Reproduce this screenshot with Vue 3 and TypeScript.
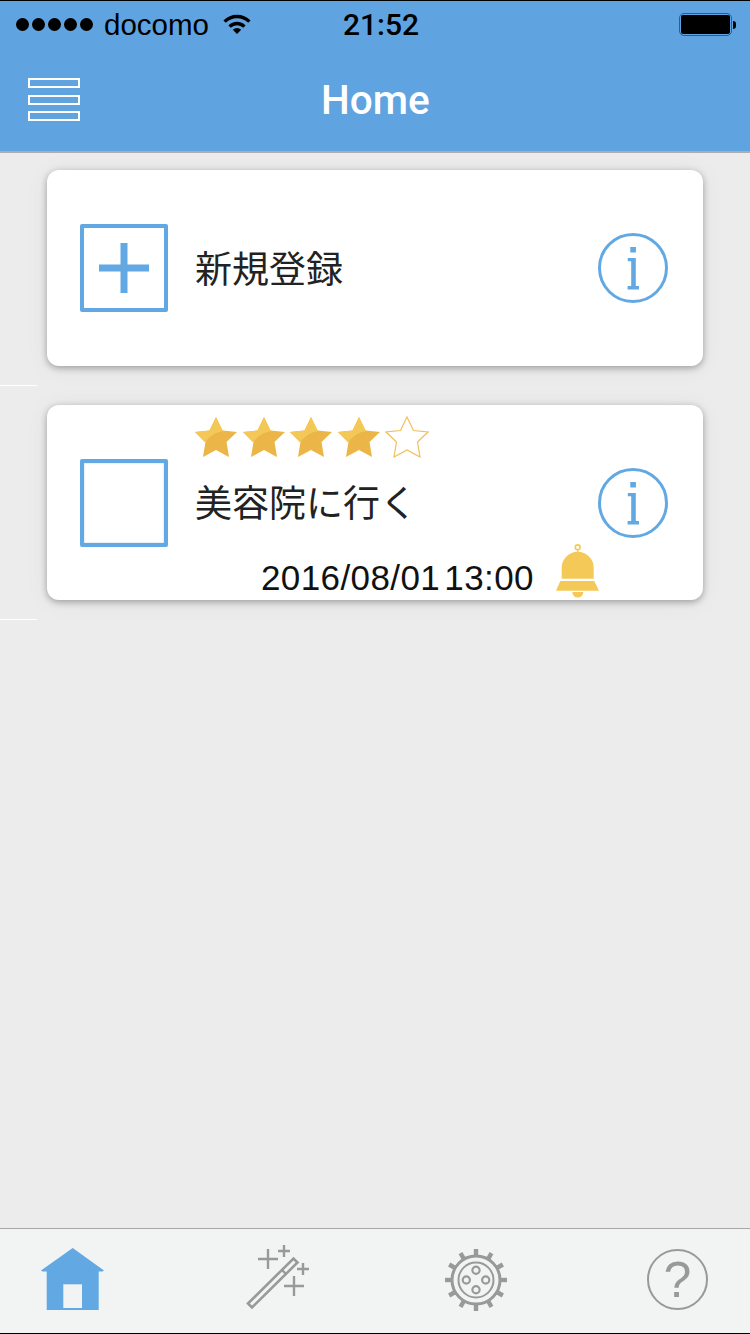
<template>
  <div class="phone">
    <header class="top">
      <div class="status">
        <div class="signal">
          <i v-for="n in 5" :key="n" class="signal-dot"></i>
        </div>
        <span class="carrier">docomo</span>
        <svg class="wifi" width="30" height="22" viewBox="-15 -20 30 22">
          <path d="M-12.4 -12.4A17.5 17.5 0 0 1 12.4 -12.4" fill="none" stroke="#000" stroke-width="3.4" />
          <path d="M-7.4 -7.4A10.5 10.5 0 0 1 7.4 -7.4" fill="none" stroke="#000" stroke-width="3.4" />
          <path d="M0 0L-4.2 -4.2A6 6 0 0 1 4.2 -4.2Z" fill="#000" />
        </svg>
        <span class="clock">21:52</span>
        <div class="battery"><i class="battery-fill"></i></div>
        <i class="battery-nub"></i>
      </div>
      <div class="nav">
        <div class="burger">
          <i></i>
          <i></i>
          <i></i>
        </div>
        <h1 class="title">Home</h1>
      </div>
    </header>

    <main class="list">
      <section class="row">
        <div class="card">
          <div class="check">
            <svg width="52" height="52" viewBox="0 0 52 52">
              <path d="M26 1V51M1 26H51" stroke="#62a8e3" stroke-width="7" fill="none" />
            </svg>
          </div>
          <div class="card-body card-body--center">
            <p class="label">新規登録</p>
          </div>
          <svg class="info" width="70" height="70" viewBox="0 0 70 70">
            <circle cx="35" cy="35" r="33.5" fill="none" stroke="#62a8e3" stroke-width="3" />
            <path d="M32.3 14H37.9V19.6H32.3ZM29.8 25H37.8V53H41V56.4H29.6V53H33.2V28.2H29.8Z" fill="#62a8e3" />
          </svg>
        </div>
      </section>
      <i class="sep"></i>

      <section class="row">
        <div class="card card--task">
          <div class="check check--soft"></div>
          <div class="card-body">
            <div class="stars">
              <svg v-for="(on, i) in stars" :key="i" class="star" width="44" height="42" viewBox="-1 -1 44 42">
                <template v-if="on">
                  <path :d="starPath" fill="#ebb547" />
                  <path d="M21 0L27.5 13.5L30 14Q17 15 10 25.5L0 15L14.5 13.5Z" fill="#f4c857" />
                </template>
                <path v-else :d="starPath" fill="#fff" stroke="#f0bf5a" stroke-width="1.2" />
              </svg>
            </div>
            <p class="label label--task">美容院に行く</p>
            <div class="when">
              <span class="date">2016/08/01 13:00</span>
              <svg class="bell" width="44" height="54" viewBox="0 0 44 54">
                <circle cx="21.7" cy="3.3" r="2.4" fill="none" stroke="#f5c958" stroke-width="1.6" />
                <path d="M21 5H22.4V8H21Z" fill="#f5c958" />
                <path d="M5.7 34.7V23.7a16 16 0 0 1 32 0V34.7Z" fill="#f5c958" />
                <path d="M4.3 37H38.3L43 46.7H0Z" fill="#f5c958" />
                <path d="M16.3 48H27.3a5.5 5.5 0 0 1 -11 0Z" fill="#f5c958" />
              </svg>
            </div>
          </div>
          <svg class="info" width="70" height="70" viewBox="0 0 70 70">
            <circle cx="35" cy="35" r="33.5" fill="none" stroke="#62a8e3" stroke-width="3" />
            <path d="M32.3 14H37.9V19.6H32.3ZM29.8 25H37.8V53H41V56.4H29.6V53H33.2V28.2H29.8Z" fill="#62a8e3" />
          </svg>
        </div>
      </section>
      <i class="sep"></i>
    </main>

    <footer class="tabs">
      <svg class="tab tab--home" width="63" height="63" viewBox="0 0 63 63">
        <path d="M31.7 0L63 22.5L61.5 23.5H57.7V62H5.7V23.5H1.5L0 22.5Z" fill="#62a8e3" />
        <rect x="22.3" y="36.3" width="18.7" height="23.7" fill="#f2f4f4" />
      </svg>
      <svg class="tab tab--wand" width="66" height="66" viewBox="0 0 66 66">
        <g fill="none" stroke="#999" stroke-width="2.4">
          <path d="M3 58.5L48.5 13.5L52.5 17.5L7 62.5Z" stroke-width="2.6" />
          <path d="M37 25L41 29" />
          <path d="M13 14H33M23 4V24" />
          <path d="M33 6H45M39 0V12" />
          <path d="M52 24H64M58 18V30" />
          <path d="M39 41H59M49 31V51" />
        </g>
      </svg>
      <svg class="tab tab--gear" width="62" height="62" viewBox="-31 -31 62 62">
        <g fill="#999">
          <rect v-for="a in teeth" :key="a" x="-2.2" y="-31" width="4.4" height="9" :transform="`rotate(${a})`" />
        </g>
        <g fill="none" stroke="#999">
          <circle r="24" stroke-width="3" fill="#f2f4f4" />
          <circle r="17.5" stroke-width="2" />
          <circle cy="-9.7" r="3.6" stroke-width="2.2" />
          <circle cy="9.7" r="3.6" stroke-width="2.2" />
          <circle cx="-9.7" r="3.6" stroke-width="2.2" />
          <circle cx="9.7" r="3.6" stroke-width="2.2" />
        </g>
      </svg>
      <div class="tab tab--help">?</div>
    </footer>
  </div>
</template>

<script setup lang="ts">
const stars: boolean[] = [true, true, true, true, false]
const starPath = 'M21 0L27.5 13.5L42 15L31.5 25L34 40L21 33L8 40L10.5 25L0 15L14.5 13.5Z'
const teeth: number[] = Array.from({ length: 12 }, (_, i) => i * 30)
</script>

<style>
html,
body {
  margin: 0;
  background: #ececec;
}
</style>

<style scoped>
.phone {
  width: 750px;
  height: 1334px;
  display: flex;
  flex-direction: column;
  background: #ececec;
  font-family: "Liberation Sans", "Noto Sans CJK JP", sans-serif;
  overflow: hidden;
}

.top {
  height: 153px;
  box-sizing: border-box;
  flex-shrink: 0;
  background: #5fa4e0;
  border-top: 1px solid #000;
  border-bottom: 2px solid #adadad;
}

.status {
  height: 47px;
  display: flex;
  align-items: center;
  padding-left: 16px;
  color: #000;
}

.signal {
  display: flex;
  gap: 3px;
}

.signal-dot {
  width: 13px;
  height: 13px;
  border-radius: 50%;
  background: #000;
}

.carrier {
  margin-left: 11px;
  font-size: 29.5px;
  width: 105px;
}

.wifi {
  margin-left: 13px;
  margin-top: 0;
}

.clock {
  margin-left: 91px;
  width: 76px;
  font-family: Roboto, "Liberation Sans", sans-serif;
  font-size: 30px;
  font-weight: 500;
}

.battery {
  margin-left: 260px;
  width: 53px;
  height: 23px;
  box-sizing: border-box;
  padding: 1px;
  border: 1.5px solid #2b5f8c;
  border-radius: 5px;
}

.battery-fill {
  display: block;
  height: 100%;
  background: #000;
  border-radius: 2px;
}

.battery-nub {
  width: 3px;
  height: 8px;
  margin-left: 1px;
  background: #000;
  border-radius: 0 3px 3px 0;
}

.nav {
  height: 103px;
  display: flex;
  align-items: center;
  padding-left: 28px;
}

.burger {
  display: flex;
  flex-direction: column;
  gap: 6.5px;
}

.burger i {
  display: block;
  width: 52px;
  height: 10px;
  box-sizing: border-box;
  border: 2px solid #fff;
}

.title {
  margin: 1px 0 0 241px;
  font-family: Roboto, "Liberation Sans", sans-serif;
  font-size: 40.5px;
  line-height: 44px;
  font-weight: 500;
  color: #fff;
}

.list {
  flex: 1;
  display: flex;
  flex-direction: column;
  align-items: flex-start;
}

.row {
  padding: 17px 47px 19px;
}

.row + .sep + .row {
  padding-top: 19px;
}

.sep {
  display: block;
  width: 37px;
  height: 1px;
  background: #fff;
}

.card {
  width: 656px;
  height: 196px;
  box-sizing: border-box;
  display: flex;
  align-items: center;
  padding: 0 35px 0 33px;
  background: #fff;
  border-radius: 12px;
  box-shadow: 0 2px 7px rgba(0, 0, 0, 0.32), 0 2px 26px rgba(0, 0, 0, 0.05);
}

.card--task {
  height: 195px;
}

.check {
  width: 88px;
  height: 88px;
  box-sizing: border-box;
  flex-shrink: 0;
  display: flex;
  align-items: center;
  justify-content: center;
  border: 4px solid #62a8e3;
  border-radius: 2px;
}

.check--soft {
  box-shadow: inset 0 0 2px rgba(98, 168, 227, 0.55);
}

.card-body {
  flex: 1;
  align-self: stretch;
  display: flex;
  flex-direction: column;
  margin-left: 27px;
  min-width: 0;
}

.card-body--center {
  justify-content: center;
  padding-bottom: 2px;
}

.label {
  margin: 0;
  font-family: "Noto Sans CJK JP", sans-serif;
  font-size: 37px;
  line-height: 48px;
  font-weight: 400;
  color: #222;
}

.label--task {
  margin-top: 19px;
}

.stars {
  display: flex;
  gap: 3.7px;
  margin: 11px 0 0 -1px;
}

.star {
  display: block;
  flex-shrink: 0;
}

.when {
  display: flex;
  align-items: center;
  margin: 26px 0 0 66px;
  height: 54px;
  white-space: nowrap;
}

.date {
  flex-shrink: 0;
  font-size: 35px;
  line-height: 54px;
  letter-spacing: 0.4px;
  word-spacing: -6px;
  color: #111;
}

.bell {
  margin: -14px 0 0 22px;
  flex-shrink: 0;
}

.info {
  display: block;
  flex-shrink: 0;
}

.tabs {
  height: 106px;
  box-sizing: border-box;
  flex-shrink: 0;
  display: flex;
  align-items: flex-start;
  padding: 16px 0 0 41px;
  background: #f2f4f4;
  border-top: 1px solid #a8a8a8;
  border-bottom: 1px solid #000;
}

.tab {
  display: block;
  flex-shrink: 0;
}

.tab--home {
  margin-top: 3px;
}

.tab--wand {
  margin-left: 141px;
}

.tab--gear {
  margin-left: 134px;
  margin-top: 4px;
}

.tab--help {
  margin-left: 140px;
  margin-top: 4px;
  width: 61px;
  height: 61px;
  box-sizing: border-box;
  display: flex;
  align-items: center;
  justify-content: center;
  border: 2.4px solid #999;
  border-radius: 50%;
  font-size: 50px;
  line-height: 1;
  color: #999;
}
</style>
